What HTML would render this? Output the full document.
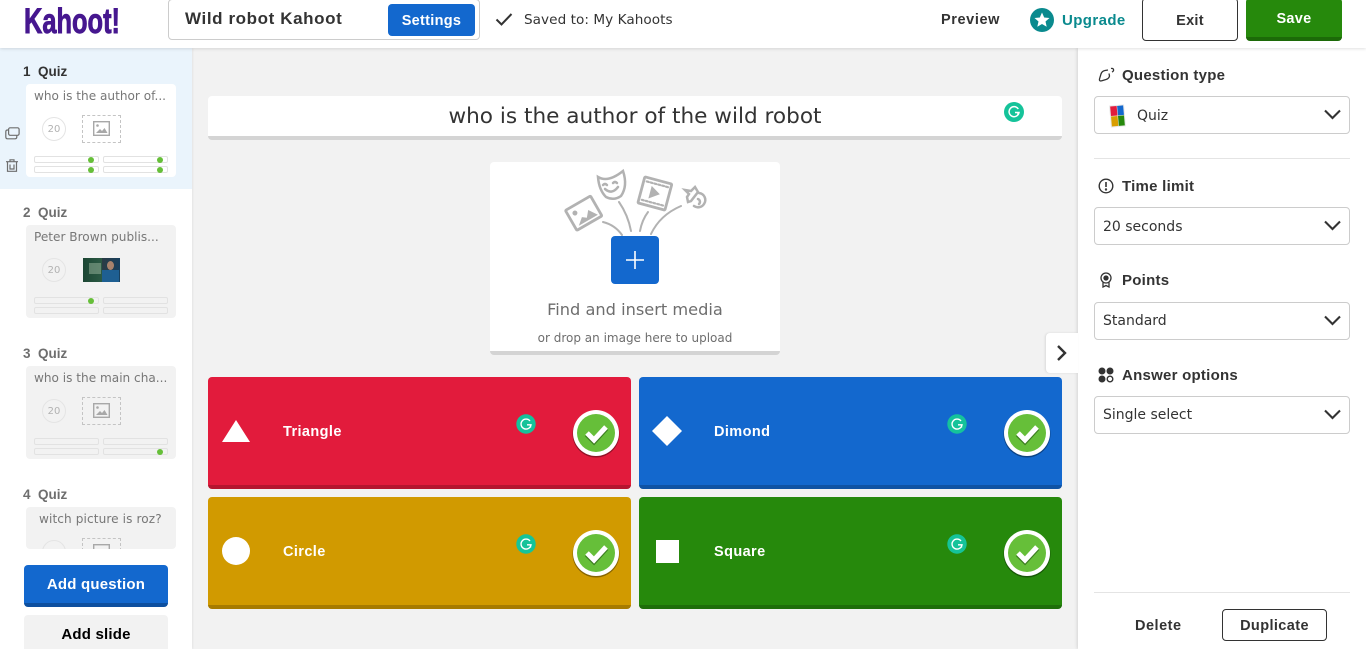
<!DOCTYPE html>
<html lang="en"><head><meta charset="utf-8"><title>Kahoot creator</title>
<style>
html,body{margin:0;padding:0;width:1366px;height:649px;overflow:hidden;background:#f2f2f2;font-family:"DejaVu Sans","Liberation Sans",sans-serif;color:#333}
div,span,svg{position:absolute;box-sizing:border-box}
#root{left:0;top:0;width:1366px;height:649px;overflow:hidden;background:#f2f2f2}
.t{white-space:nowrap;line-height:20px}
.b{font-family:"Liberation Sans",sans-serif;font-weight:700}
.card{left:26px;width:150px;height:93px;border-radius:4px;background:#f2f2f2;overflow:hidden}
.card .q{left:8px;top:2px;font-size:12.1px;color:#777}
.timer{left:16px;top:33px;width:24px;height:24px;border:1px solid #e4e4e4;border-radius:50%;font-size:10px;line-height:23px;text-align:center;color:#b2b2b2}
.drop{left:56px;top:31px;width:39px;height:28px;border:1px dashed #c4c4c4}
.drop svg{left:10px;top:5px}
.bar{width:65px;height:7px;border:1px solid #e2e2e2;border-radius:2px}
.a1{left:8px;top:72px}.a2{left:77px;top:72px}.a3{left:8px;top:82px}.a4{left:77px;top:82px}
.dot{width:6px;height:6px;border-radius:50%;background:#66bf39;right:4px;top:0}
.num{font-size:13.500px;color:#333;line-height:16px;white-space:nowrap}
.ans{width:423px;height:112px;border-radius:4px}
.lab{left:75px;top:45px;color:#fff;font-size:14.5px;letter-spacing:.4px}
.sel{left:1094px;width:256px;height:38px;border:1px solid #ccc;border-radius:4px;background:#fff}
.sel .t{left:8px;top:8px;font-size:14px;color:#333}
.sel svg{left:229px;top:11px}
.hd{left:1122px;font-size:15px;color:#333;letter-spacing:.25px}
</style></head><body><div id="root">

<!-- main question -->
<div style="left:208px;top:96px;width:854px;height:44px;background:#fff;border-radius:4px;border-bottom:4px solid #d4d4d4"></div>
<div class="t" style="left:208px;top:107px;width:854px;text-align:center;font-size:21.6px;color:#333">who is the author of the wild robot</div>
<svg style="left:1004px;top:102px" width="20" height="20" viewBox="0 0 20 20"><circle cx="10" cy="10" r="10" fill="#15c39a"/><path d="M14.3 7A5 5 0 1 0 15 10.5H11" fill="none" stroke="#fff" stroke-width="1.5"/><path d="M14 13v-3" stroke="#fff" stroke-width="1.5"/></svg>

<!-- media -->
<div style="left:490px;top:162px;width:290px;height:193px;background:#fff;border-radius:4px;border-bottom:4px solid #d4d4d4"></div>
<svg style="left:490px;top:160px" width="290" height="90" viewBox="490 160 290 90" fill="none" stroke="#b2b2b2" stroke-width="2" stroke-linecap="round">
<path d="M603 222Q615 225 622 235M619 202Q628 215 631 231M648 212Q642 220 640 231M681 206Q660 215 651 234"/>
<g transform="rotate(-30 583 213)" stroke-width="2.800"><rect x="569" y="202" width="29" height="23" rx="1"/><circle cx="576" cy="209" r="2.500" fill="#b2b2b2" stroke="none"/><path d="M573 222l7-6 4 3 5-6 6 9z" fill="#b2b2b2" stroke="none"/></g>
<g stroke-width="2.500"><path d="M598 177Q608 183 623 171Q628 186 621 196Q614 201 606 197Q599 190 598 177Z"/><path d="M603 185q2-2 4 0M613 183q2-2 4 0M605 189q7 6 13-2"/></g>
<g transform="rotate(15 655 193)" stroke-width="2.800"><rect x="641" y="180" width="28" height="27" rx="1"/><path d="M644 184h22M644 203h22" stroke-dasharray="2 2" stroke-width="2.200"/><path d="M650 187l10 6-10 7z" fill="#b2b2b2" stroke="none"/></g>
<g stroke-width="2.500"><path d="M685 190l6 1 4-4 3 5-7 9-3 1-1-5 2-3z"/><path d="M699 193a7 7 0 0 1 5 11 7 7 0 0 1-10 2"/><path d="M698 199a3 3 0 0 1 1 5"/></g>
</svg>
<div style="left:611px;top:236px;width:48px;height:48px;background:#1368ce;border-radius:4px"></div>
<svg style="left:626px;top:251px" width="18" height="18"><path d="M9 0v18M0 9h18" stroke="#fff" stroke-width="1.6"/></svg>
<div class="t" style="left:490px;top:300px;width:290px;text-align:center;font-size:16.2px;color:#6e6e6e">Find and insert media</div>
<div class="t" style="left:490px;top:328px;width:290px;text-align:center;font-size:12px;color:#6e6e6e">or drop an image here to upload</div>

<!-- answers -->
<div class="ans" style="left:208px;top:377px;background:#e21b3c;border-bottom:4px solid #b5152f"><svg style="left:14px;top:43px" width="28" height="22"><path d="M14 0L28 22H0Z" fill="#fff"/></svg><div class="t b lab">Triangle</div></div>
<div class="ans" style="left:639px;top:377px;background:#1368ce;border-bottom:4px solid #0f53a4"><svg style="left:13px;top:39px" width="30" height="30"><path d="M15 0L30 15 15 30 0 15Z" fill="#fff"/></svg><div class="t b lab">Dimond</div></div>
<div class="ans" style="left:208px;top:497px;background:#d19a00;border-bottom:4px solid #a77b00"><svg style="left:14px;top:40px" width="28" height="28"><circle cx="14" cy="14" r="14" fill="#fff"/></svg><div class="t b lab">Circle</div></div>
<div class="ans" style="left:639px;top:497px;background:#26890c;border-bottom:4px solid #1e6e0a"><svg style="left:17px;top:43px" width="23" height="23"><rect width="23" height="23" fill="#fff"/></svg><div class="t b lab">Square</div></div>

<svg style="left:0;top:0;pointer-events:none" width="1366" height="649">
<defs>
<g id="ok"><circle cx="0" cy="1" r="23.5" fill="#000" opacity=".35"/><circle r="23" fill="#fff"/><circle r="19" fill="#66bf39"/><path d="M-9 1l7 7 12-13" fill="none" stroke="#3c7d20" stroke-width="6"/><path d="M-9 0l7 7 12-13" fill="none" stroke="#fff" stroke-width="5"/></g>
<g id="gr"><circle r="9.700" fill="#15c39a"/><path d="M4 -3A5 5 0 1 0 5 .8H1M4.500 3.500V.8" fill="none" stroke="#fff" stroke-width="1.400"/></g>
</defs>
<use href="#ok" x="596" y="433"/><use href="#ok" x="1027" y="433"/><use href="#ok" x="596" y="553"/><use href="#ok" x="1027" y="553"/>
<use href="#gr" x="526" y="424"/><use href="#gr" x="957" y="424"/><use href="#gr" x="526" y="544"/><use href="#gr" x="957" y="544"/>
</svg>

<!-- left sidebar -->
<div style="left:0;top:48px;width:192px;height:601px;background:#fff;box-shadow:1px 0 2px rgba(0,0,0,.06)"></div>
<div style="left:0;top:48px;width:192px;height:141px;background:#eaf4fc"></div>

<div class="t b num" style="left:23px;top:64px">1&nbsp; Quiz</div>
<div class="card" style="top:84px;background:#fff"><div class="t q">who is the author of...</div><div class="timer">20</div><div class="drop"><svg width="17" height="15" viewBox="0 0 17 15"><rect x=".7" y=".7" width="15.600" height="13.600" fill="none" stroke="#a8a8a8" stroke-width="1.400"/><circle cx="4.500" cy="4.500" r="1.300" fill="#a8a8a8"/><path d="M3 12l4-4 2 2 2.500-3 3 5z" fill="#a8a8a8"/></svg></div>
<div class="bar a1"><div class="dot"></div></div><div class="bar a2"><div class="dot"></div></div><div class="bar a3"><div class="dot"></div></div><div class="bar a4"><div class="dot"></div></div></div>
<svg style="left:5px;top:127px" width="15" height="13" viewBox="0 0 15 13" fill="none" stroke="#6e6e6e" stroke-width="1.200"><rect x="3.600" y=".8" width="10.500" height="7.500" rx="1.500"/><path d="M3.600 3H2.500Q.8 3 .8 4.700V10Q.8 11.800 2.500 11.800H10Q11.800 11.800 11.800 10V8.300"/></svg>
<svg style="left:6px;top:159px" width="12" height="13" viewBox="0 0 12 13" fill="none" stroke="#6e6e6e" stroke-width="1.200"><path d="M0 2.700h12M4 2.700V.8h4v1.900M1.500 2.700V12.300H10.500V2.700M4 5.500v4.500h4V5.500"/></svg>

<div class="t b num" style="left:23px;top:205px;color:#6e6e6e">2&nbsp; Quiz</div>
<div class="card" style="top:225px"><div class="t q">Peter Brown publis...</div><div class="timer">20</div>
<div style="left:57px;top:33px;width:37px;height:24px;background:linear-gradient(90deg,#1c4634 0,#2c5a44 52%,#2b3c44 52%,#18405f 100%)"></div><div style="left:63px;top:38px;width:12px;height:11px;background:#a8c0a8;opacity:.45"></div><div style="left:81px;top:36px;width:7px;height:9px;border-radius:50%;background:#a8826c"></div><div style="left:76px;top:45px;width:17px;height:12px;background:#1e5f92"></div>
<div class="bar a1"><div class="dot"></div></div><div class="bar a2"></div><div class="bar a3"></div><div class="bar a4"></div></div>

<div class="t b num" style="left:23px;top:346px;color:#6e6e6e">3&nbsp; Quiz</div>
<div class="card" style="top:366px"><div class="t q">who is the main cha...</div><div class="timer">20</div><div class="drop"><svg width="17" height="15" viewBox="0 0 17 15"><rect x=".7" y=".7" width="15.600" height="13.600" fill="none" stroke="#a8a8a8" stroke-width="1.400"/><circle cx="4.500" cy="4.500" r="1.300" fill="#a8a8a8"/><path d="M3 12l4-4 2 2 2.500-3 3 5z" fill="#a8a8a8"/></svg></div>
<div class="bar a1"></div><div class="bar a2"></div><div class="bar a3"></div><div class="bar a4"><div class="dot"></div></div></div>

<div class="t b num" style="left:23px;top:487px;color:#6e6e6e">4&nbsp; Quiz</div>
<div class="card" style="top:507px;height:42px"><div class="t q" style="left:13px;letter-spacing:.1px">witch picture is roz?</div><div class="timer"></div><div class="drop"><svg width="17" height="15" viewBox="0 0 17 15"><rect x=".7" y=".7" width="15.600" height="13.600" fill="none" stroke="#a8a8a8" stroke-width="1.400"/></svg></div></div>

<div class="t b" style="left:24px;top:565px;width:144px;height:42px;background:#1368ce;border-bottom:4px solid #0d4f9f;border-radius:4px;color:#fff;text-align:center;line-height:40px;font-size:15px;letter-spacing:.2px">Add question</div>
<div class="t b" style="left:24px;top:615px;width:144px;height:34px;background:#f2f2f2;border-radius:4px 4px 0 0;color:#000;text-align:center;line-height:40px;font-size:15px;letter-spacing:.2px">Add slide</div>

<!-- right panel -->
<div style="left:1078px;top:48px;width:288px;height:601px;background:#fff;box-shadow:-1px 0 3px rgba(0,0,0,.12)"></div>
<div style="left:1046px;top:333px;width:32px;height:40px;background:#fff;border-radius:4px 0 0 4px;box-shadow:-1px 0 2px rgba(0,0,0,.1)"></div>
<svg style="left:1056px;top:345px" width="12" height="16"><path d="M2 1l7 7-7 7" fill="none" stroke="#333" stroke-width="2.400"/></svg>

<svg style="left:1098px;top:67px" width="17" height="16" viewBox="0 0 17 16" fill="none" stroke="#333" stroke-width="1.300"><path d="M3 14Q1 14 1.500 12L3 7Q4 4 7 3.500L10 3M11 6.500L11.500 9Q11 11.500 8 12.500L3 14"/><path d="M13 1.500q2-.5 2.500 1t-1.500 2.500"/></svg>
<div class="t b hd" style="top:66px">Question type</div>
<div class="sel" style="top:96px"><svg style="left:13px;top:7px" width="18" height="24" viewBox="0 0 18 24"><g transform="rotate(-5 9 12)"><rect x="2" y="1" width="15" height="22" fill="#e8e8e8"/><rect x="3" y="2" width="6.500" height="9.500" fill="#e21b3c"/><rect x="10" y="2" width="6" height="9.500" fill="#1368ce"/><rect x="3" y="12" width="6.500" height="10" fill="#d89e00"/><rect x="10" y="12" width="6" height="10" fill="#26890c"/></g></svg><div class="t" style="left:42px;top:9px">Quiz</div><svg width="17" height="14"><path d="M1 2.500l7.500 7.500 7.500-7.500" fill="none" stroke="#333" stroke-width="2.100"/></svg></div>
<div style="left:1094px;top:158px;width:256px;height:1px;background:#e4e4e4"></div>

<svg style="left:1098px;top:178px" width="16" height="16" fill="none" stroke="#333" stroke-width="1.400"><circle cx="8" cy="8" r="6.800"/><path d="M8 4v5" stroke-width="1.600"/><circle cx="8" cy="11.500" r=".5"/></svg>
<div class="t b hd" style="top:177px">Time limit</div>
<div class="sel" style="top:207px"><div class="t" style="top:9px">20 seconds</div><svg width="17" height="14"><path d="M1 2.500l7.500 7.500 7.500-7.500" fill="none" stroke="#333" stroke-width="2.100"/></svg></div>

<svg style="left:1099px;top:272px" width="14" height="16" fill="none" stroke="#333" stroke-width="1.300"><circle cx="7" cy="6" r="5"/><circle cx="7" cy="6" r="2" fill="#333"/><path d="M4 10.500V15l3-1.500 3 1.500v-4.500"/></svg>
<div class="t b hd" style="top:271px">Points</div>
<div class="sel" style="top:302px"><div class="t">Standard</div><svg width="17" height="14"><path d="M1 2.500l7.500 7.500 7.500-7.500" fill="none" stroke="#333" stroke-width="2.100"/></svg></div>

<svg style="left:1098px;top:367px" width="16" height="16"><circle cx="4" cy="4" r="3.500" fill="#333"/><circle cx="12" cy="4" r="3.500" fill="#333"/><circle cx="4" cy="12" r="3.500" fill="#333"/><circle cx="12" cy="12" r="2.800" fill="none" stroke="#333" stroke-width="1.400"/></svg>
<div class="t b hd" style="top:366px">Answer options</div>
<div class="sel" style="top:396px"><div class="t">Single select</div><svg width="17" height="14"><path d="M1 2.500l7.500 7.500 7.500-7.500" fill="none" stroke="#333" stroke-width="2.100"/></svg></div>

<div style="left:1094px;top:592px;width:256px;height:1px;background:#e4e4e4"></div>
<div class="t b" style="left:1135px;top:616px;font-size:14.5px;letter-spacing:.5px;color:#333">Delete</div>
<div class="t b" style="left:1222px;top:609px;width:105px;height:32px;border:1px solid #333;border-radius:4px;text-align:center;line-height:32px;font-size:14.5px;letter-spacing:.4px;color:#333">Duplicate</div>

<!-- header -->
<div style="left:0;top:0;width:1366px;height:48px;background:#fff;box-shadow:0 1px 3px rgba(0,0,0,.12)"></div>
<svg style="left:20px;top:0" width="106" height="42"><text x="4" y="33" font-family="Liberation Sans" font-weight="700" font-size="35" fill="#46178f" stroke="#46178f" stroke-width=".9" textLength="96" lengthAdjust="spacingAndGlyphs">Kahoot!</text></svg>
<div style="left:168px;top:-1px;width:312px;height:41px;border:1px solid #ccc;border-radius:4px;background:#fff"></div>
<div class="t b" style="left:185px;top:9px;font-size:17px;letter-spacing:.6px;color:#333">Wild robot Kahoot</div>
<div class="t b" style="left:388px;top:4px;width:87px;height:32px;background:#1368ce;border-radius:4px;color:#fff;text-align:center;line-height:34px;font-size:14.5px;letter-spacing:.3px">Settings</div>
<svg style="left:495px;top:12px" width="18" height="15"><path d="M1.500 7.500l5 5L16.500 2" fill="none" stroke="#333" stroke-width="2"/></svg>
<div class="t" style="left:524px;top:10px;font-size:13.600px;color:#333;letter-spacing:.05px">Saved to: My Kahoots</div>
<div class="t b" style="left:941px;top:10px;font-size:14.5px;letter-spacing:.6px;color:#333;line-height:21px">Preview</div>
<svg style="left:1030px;top:8px" width="24" height="24"><circle cx="12" cy="12" r="12" fill="#0a8a8e"/><path d="M12 4.500l2.200 5 5.300.5-4 3.500 1.200 5.300L12 16l-4.700 2.800 1.200-5.300-4-3.500 5.300-.5z" fill="#fff"/></svg>
<div class="t b" style="left:1062px;top:10px;font-size:15px;letter-spacing:.4px;color:#0a8a8e;line-height:21px">Upgrade</div>
<div class="t b" style="left:1142px;top:-2px;width:96px;height:43px;background:#fff;border:1px solid #333;border-radius:4px;text-align:center;line-height:44px;font-size:14.5px;letter-spacing:.3px;color:#333">Exit</div>
<div class="t b" style="left:1246px;top:-2px;width:96px;height:43px;background:#26890c;border-bottom:4px solid #1c6a08;border-radius:4px;text-align:center;line-height:43px;font-size:14.5px;letter-spacing:.3px;color:#fff">Save</div>
</div></body></html>
